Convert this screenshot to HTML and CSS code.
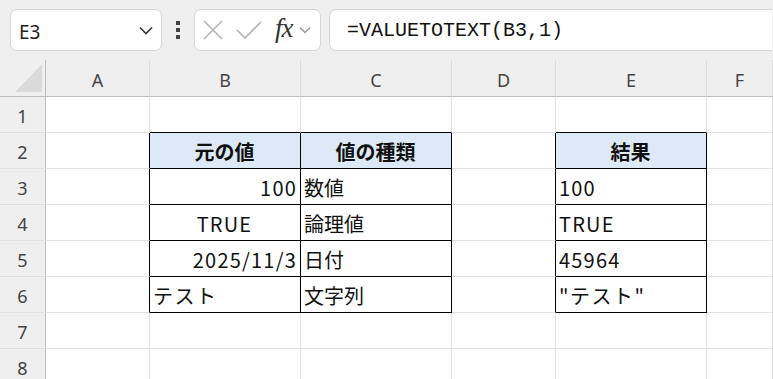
FILE: index.html
```html
<!DOCTYPE html>
<html>
	<head>
		<meta charset="UTF-8">
		<title>VALUETOTEXT</title>
		<link rel="stylesheet" href="styles.css">
	</head>
	<body>
		<div class="toolbar">
			<div class="namebox">
				<span>E3</span>
				<svg width="14" height="9" viewBox="0 0 14 9"><path d="M1 1.5 L7 7.5 L13 1.5" fill="none" stroke="#333" stroke-width="1.6"/></svg>
			</div>
			<div class="dots"><i></i><i></i><i></i></div>
			<div class="fxbox">
				<svg width="22" height="20" viewBox="0 0 22 20"><path d="M2 1 L20 19 M20 1 L2 19" stroke="#b4b4b4" stroke-width="1.6" fill="none"/></svg>
				<svg width="26" height="20" viewBox="0 0 26 20"><path d="M1 10 L9 18 L25 2" stroke="#b4b4b4" stroke-width="1.6" fill="none"/></svg>
				<span class="fx">fx</span>
				<svg width="12" height="8" viewBox="0 0 12 8"><path d="M1 1.5 L6 6.5 L11 1.5" fill="none" stroke="#999" stroke-width="1.4"/></svg>
			</div>
			<div class="formula">=VALUETOTEXT(B3,1)</div>
		</div>
		<div class="sheet">
			<!-- 列見出し -->
			<div class="corner"><svg width="28" height="29" viewBox="0 0 28 29"><path d="M0 28 L27 28 L27 0 Z" fill="#dadada"/></svg></div>
			<div class="colhead">A</div>
			<div class="colhead">B</div>
			<div class="colhead">C</div>
			<div class="colhead">D</div>
			<div class="colhead">E</div>
			<div class="colhead">F</div>
			<!-- 1 -->
			<div class="rowhead">1</div>
			<div class="cell"></div>
			<div class="cell bb"></div>
			<div class="cell bb"></div>
			<div class="cell"></div>
			<div class="cell bb"></div>
			<div class="cell"></div>
			<!-- 2 -->
			<div class="rowhead">2</div>
			<div class="cell br"></div>
			<div class="cell t th">元の値</div>
			<div class="cell t th">値の種類</div>
			<div class="cell br"></div>
			<div class="cell t th">結果</div>
			<div class="cell"></div>
			<!-- 3 -->
			<div class="rowhead">3</div>
			<div class="cell br"></div>
			<div class="cell t right num">100</div>
			<div class="cell t">数値</div>
			<div class="cell br"></div>
			<div class="cell t num">100</div>
			<div class="cell"></div>
			<!-- 4 -->
			<div class="rowhead">4</div>
			<div class="cell br"></div>
			<div class="cell t center num">TRUE</div>
			<div class="cell t">論理値</div>
			<div class="cell br"></div>
			<div class="cell t num">TRUE</div>
			<div class="cell"></div>
			<!-- 5 -->
			<div class="rowhead">5</div>
			<div class="cell br"></div>
			<div class="cell t right num">2025/11/3</div>
			<div class="cell t">日付</div>
			<div class="cell br"></div>
			<div class="cell t num">45964</div>
			<div class="cell"></div>
			<!-- 6 -->
			<div class="rowhead">6</div>
			<div class="cell br"></div>
			<div class="cell t kana">テスト</div>
			<div class="cell t">文字列</div>
			<div class="cell br"></div>
			<div class="cell t kana">"テスト"</div>
			<div class="cell"></div>
			<!-- 7 -->
			<div class="rowhead">7</div>
			<div class="cell"></div>
			<div class="cell"></div>
			<div class="cell"></div>
			<div class="cell"></div>
			<div class="cell"></div>
			<div class="cell"></div>
			<!-- 8 -->
			<div class="rowhead">8</div>
			<div class="cell"></div>
			<div class="cell"></div>
			<div class="cell"></div>
			<div class="cell"></div>
			<div class="cell"></div>
			<div class="cell"></div>
		</div>
	</body>
</html>
```
FILE: styles.css
```css
*{
	padding: 0;
	margin: 0;
	box-sizing: border-box;
}
body,html{
	width: 100%;
	height: 100%;
	overflow: hidden;
	background: #fff;
	font-family: "Noto Sans", "Noto Sans CJK JP", sans-serif;
}
.toolbar{
	height: 60px;
	background: #efefef;
	display: flex;
	align-items: flex-start;
	padding: 9px 1px 0 10px;
}
.namebox{
	width: 152px;
	height: 42px;
	background: #fff;
	border: 1px solid #d6d6d6;
	border-radius: 7px;
	display: flex;
	align-items: center;
	justify-content: space-between;
	padding: 0 8px 0 8px;
	font-size: 19px;
	color: #222;
}
.namebox span{
	padding-top: 4px;
}
.dots{
	width: 32px;
	height: 42px;
	display: flex;
	flex-direction: column;
	align-items: center;
	justify-content: center;
	gap: 3px;
}
.dots i{
	width: 4px;
	height: 4px;
	background: #444;
	display: block;
}
.fxbox{
	width: 127px;
	height: 42px;
	background: #fff;
	border: 1px solid #d6d6d6;
	border-radius: 7px;
	display: flex;
	align-items: center;
	padding: 0 6px 0 7px;
	gap: 6px;
}
.fxbox svg:nth-child(2){
	margin-left: 6px;
}
.fx{
	font-family: "Liberation Serif", serif;
	font-style: italic;
	font-size: 27px;
	color: #333;
	margin-left: 7px;
	letter-spacing: -1px;
	line-height: 1;
	padding-bottom: 3px;
}
.formula{
	flex: 1;
	margin-left: 8px;
	height: 42px;
	background: #fff;
	border: 1px solid #d6d6d6;
	border-right: none;
	border-radius: 7px 0 0 7px;
	display: flex;
	align-items: center;
	padding-left: 17px;
	font-family: "Liberation Mono", monospace;
	font-size: 20px;
	color: #111;
}
.sheet{
	display: grid;
	grid-template-columns: 46px 104px 151px 151px 104px 151px 1fr;
	grid-template-rows: 37px repeat(8, 36px);
}
.corner{
	background: #efefef;
	border-right: 1px solid #bdbdbd;
	border-bottom: 1px solid #bdbdbd;
	padding: 4px 0 0 15px;
}
.corner svg{
	display: block;
}
.colhead{
	background: #efefef;
	border-bottom: 1px solid #bdbdbd;
	border-right: 1px solid #dcdcdc;
	display: flex;
	align-items: center;
	justify-content: center;
	font-size: 18px;
	color: #444;
	padding-top: 3px;
}
.rowhead{
	background: #efefef;
	border-right: 1px solid #bdbdbd;
	border-bottom: 1px solid #e0e0e0;
	display: flex;
	align-items: center;
	justify-content: center;
	font-size: 18px;
	color: #444;
	padding-top: 3px;
}
.cell{
	border-right: 1px solid #e1e1e1;
	border-bottom: 1px solid #e1e1e1;
	display: flex;
	align-items: center;
	padding: 1px 4px 0 3px;
	font-family: "Noto Sans CJK JP", sans-serif;
	font-size: 20px;
	color: #111;
	white-space: nowrap;
}
.cell.t{
	border-right-color: #000;
	border-bottom-color: #000;
}
.cell.bb{
	border-bottom-color: #000;
}
.cell.br{
	border-right-color: #000;
}
.th{
	background: #dde9f6;
	font-weight: bold;
	justify-content: center;
}
.num{
	letter-spacing: 1.2px;
}
.num.right{
	padding-right: 3px;
}
.kana{
	letter-spacing: 1.5px;
}
.right{
	justify-content: flex-end;
}
.center{
	justify-content: center;
}
```
